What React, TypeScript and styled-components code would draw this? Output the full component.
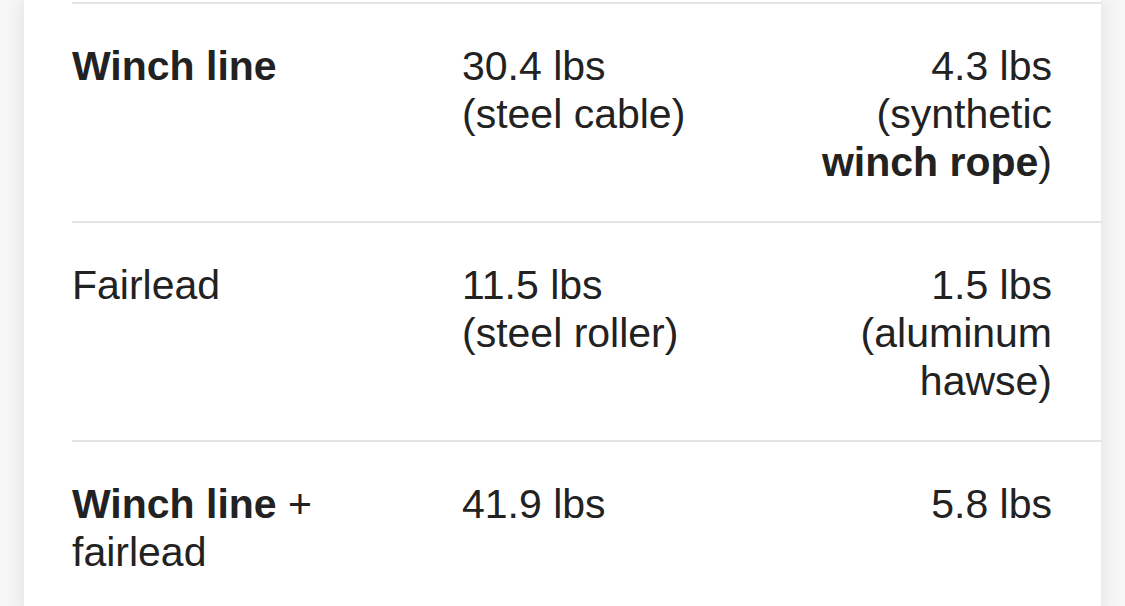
import * as React from 'react';
import styled, { createGlobalStyle } from 'styled-components';

const GlobalStyle = createGlobalStyle`
  html, body {
    margin: 0;
    padding: 0;
    background: #f6f6f6;
  }
  body {
    font-family: "Liberation Sans", Arial, Helvetica, sans-serif;
    color: #222222;
    -webkit-font-smoothing: antialiased;
  }
`;

const Page = styled.div`
  height: 606px;
  overflow: hidden;
  padding: 0 24px 0 24px;
  display: flex;
`;

const Card = styled.div`
  width: 1077px;
  min-height: 605px;
  align-self: flex-start;
  background: #ffffff;
  box-shadow: 0 0 18px rgba(0, 0, 0, 0.1);
  padding: 2px 0 0 48px;
  box-sizing: border-box;
`;

const Table = styled.div`
  display: flex;
  flex-direction: column;
`;

const Row = styled.div`
  display: grid;
  grid-template-columns: 390px 340px 250px;
  border-top: 2px solid #e4e4e4;
  padding: 38px 49px 35px 0;
  font-size: 41px;
  line-height: 48px;
`;

const Cell = styled.div<{ $right?: boolean }>`
  padding-right: ${(p) => (p.$right ? '0' : '40px')};
  text-align: ${(p) => (p.$right ? 'right' : 'left')};
`;

const Strong = styled.b`
  font-weight: 700;
`;

export default function App() {
  return (
    <>
      <GlobalStyle />
      <Page>
        <Card>
          <Table>
            <Row>
              <Cell><Strong>Winch line</Strong></Cell>
              <Cell>30.4 lbs<br />(steel cable)</Cell>
              <Cell $right>4.3 lbs<br />(synthetic <Strong>winch rope</Strong>)</Cell>
            </Row>
            <Row>
              <Cell>Fairlead</Cell>
              <Cell>11.5 lbs<br />(steel roller)</Cell>
              <Cell $right>1.5 lbs<br />(aluminum hawse)</Cell>
            </Row>
            <Row>
              <Cell><Strong>Winch line</Strong> + fairlead</Cell>
              <Cell>41.9 lbs</Cell>
              <Cell $right>5.8 lbs</Cell>
            </Row>
          </Table>
        </Card>
      </Page>
    </>
  );
}
